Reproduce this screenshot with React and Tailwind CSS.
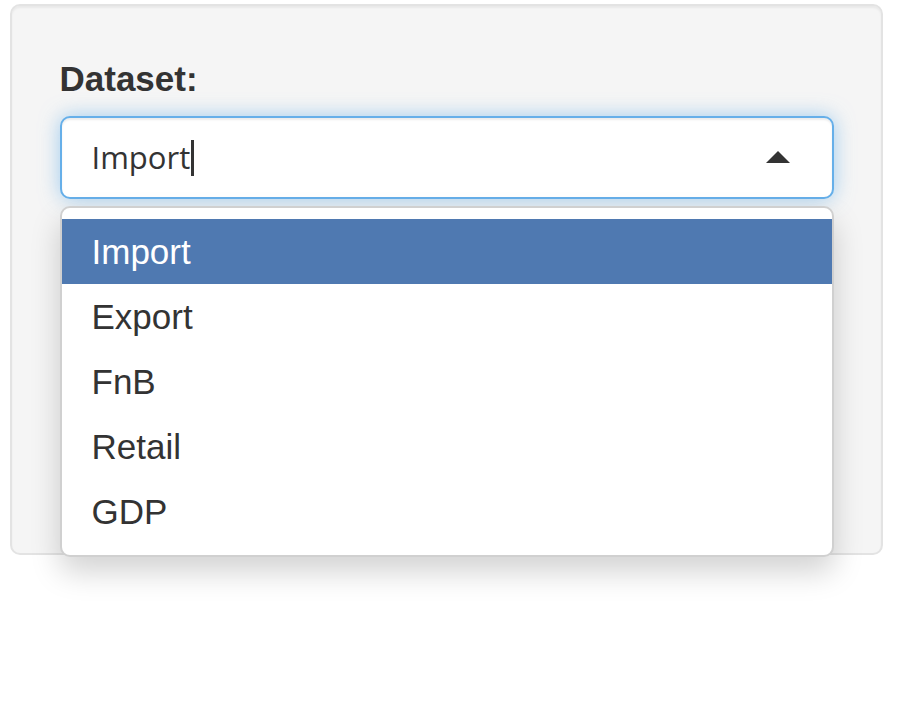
import React from "react";

const options = ["Import", "Export", "FnB", "Retail", "GDP"];

export default function App() {
  return (
    <div className="w-[907px] h-[705px] bg-white pl-[10px] pt-[4px]" style={{}}>
      <div
        className="w-[873px] h-[551px] bg-[#f5f5f5] border-[2.5px] border-[#e3e3e3] rounded-[10px] px-[47.5px] pt-[47.5px] shadow-[inset_0_2px_2px_rgba(0,0,0,0.05)]"
        style={{ fontFamily: '"Liberation Sans", Arial, sans-serif' }}
      >
        <div className="text-[35px] leading-[50px] font-bold text-[#333] mb-[12.5px]">Dataset:</div>
        <div className="relative">
          <div className="h-[83px] bg-white border-[2.5px] border-[#66afe9] rounded-[10px] flex items-center pl-[30px] pr-[42px] shadow-[inset_0_2px_2px_rgba(0,0,0,0.075),0_0_20px_rgba(102,175,233,0.6)]">
            <span
              className="text-[31px] text-[#333] leading-none"
              style={{ fontFamily: '"Open Sans", "Noto Sans", sans-serif' }}
            >
              Import
            </span>
            <span className="w-[2.5px] h-[36px] bg-[#333] ml-[1px]" />
            <span className="ml-auto w-0 h-0 border-l-[12px] border-r-[12px] border-b-[12px] border-l-transparent border-r-transparent border-b-[#333] mb-[1px]" />
          </div>
          <div className="absolute left-0 right-0 top-[90px] bg-white border-2 border-[#d0d0d0] rounded-[10px] py-[11px] shadow-[0_15px_30px_rgba(0,0,0,0.175)] z-10">
            {options.map((o, i) => (
              <div
                key={o}
                className={
                  i === 0
                    ? "h-[65px] leading-[65px] pl-[30px] text-[35px] bg-[#4f79b1] text-white"
                    : "h-[65px] leading-[65px] pl-[30px] text-[35px] text-[#333]"
                }
              >
                {o}
              </div>
            ))}
          </div>
        </div>
      </div>
    </div>
  );
}
